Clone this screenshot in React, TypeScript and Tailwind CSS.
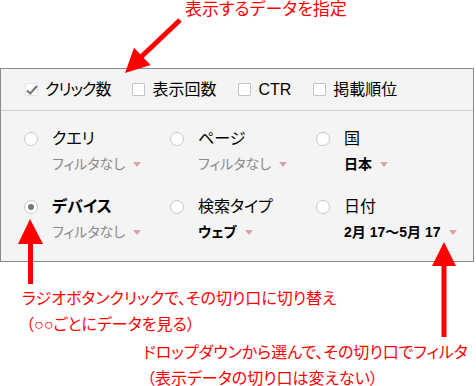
import React from "react";

const jp = "font-['Liberation_Sans','Noto_Sans_CJK_JP',sans-serif] [font-feature-settings:'palt']";

function Check({ checked }: { checked?: boolean }) {
  return (
    <span className={`relative w-[13px] h-[13px] border ${checked ? "border-[#e4e4e4]" : "border-[#c4c4c4]"} bg-white rounded-[1px] inline-block shrink-0`}>
      {checked && (
        <svg className="absolute -left-[1px] -top-[1px]" width="14" height="14" viewBox="0 0 14 14">
          <path d="M2 7.5 L5.2 10.5 L12 3" fill="none" stroke="#777" strokeWidth="2.2" />
        </svg>
      )}
    </span>
  );
}

function Radio({ on }: { on?: boolean }) {
  return (
    <span className="w-[14px] h-[14px] rounded-full border border-[#c8c8c8] bg-white flex items-center justify-center shrink-0">
      {on && <span className="w-[6px] h-[6px] rounded-full bg-[#777]" />}
    </span>
  );
}

function Tri() {
  return (
    <svg width="8" height="5" viewBox="0 0 8 5" className="ml-[8px] mt-[1px]">
      <path d="M0 0 H8 L4 5 Z" fill="#d8a3a3" />
    </svg>
  );
}

function Cell({ label, value, bold, on }: { label: string; value: string; bold?: boolean; on?: boolean }) {
  return (
    <div className="flex">
      <div className="pt-[4px]">
        <Radio on={on} />
      </div>
      <div className="ml-[14px] flex flex-col">
        <div className={`text-[16px] leading-[22px] text-black ${on ? "font-semibold" : ""}`}>{label}</div>
        <div className="flex items-center mt-[3px] h-[22px]">
          <span className={bold ? "text-[14px] font-bold text-black" : "text-[14px] text-[#8a8a8a]"}>{value}</span>
          <Tri />
        </div>
      </div>
    </div>
  );
}

export default function App() {
  return (
    <div className={`relative w-[476px] h-[386px] bg-white overflow-hidden ${jp}`}>
      <div className="h-[68px] pl-[185px] text-[17px] leading-[20px] text-[#ff0000]">表示するデータを指定</div>
      <div className="w-[474px] border border-[#8a8a8a] bg-[#f4f4f4]">
        <div className="h-[42px] border-b border-[#cfcfcf] flex items-center pl-[24px] text-[16px] text-black">
          <div className="flex items-center"><Check checked /><span className="ml-[7px] tracking-[-1px]">クリック数</span></div>
          <div className="flex items-center ml-[22px]"><Check /><span className="ml-[7px]">表示回数</span></div>
          <div className="flex items-center ml-[22px]"><Check /><span className="ml-[7px]">CTR</span></div>
          <div className="flex items-center ml-[22px]"><Check /><span className="ml-[7px]">掲載順位</span></div>
        </div>
        <div className="grid grid-cols-[146px_146px_146px] gap-y-[21px] pl-[23px] pt-[17px] pb-[18px]">
          <Cell label="クエリ" value="フィルタなし" />
          <Cell label="ページ" value="フィルタなし" />
          <Cell label="国" value="日本" bold />
          <Cell label="デバイス" value="フィルタなし" on />
          <Cell label="検索タイプ" value="ウェブ" bold />
          <Cell label="日付" value="2月 17〜5月 17" bold />
        </div>
      </div>
      <div className="pl-[22px] pt-[24px] text-[16px] leading-[26px] text-[#ff0000]">
        <div>ラジオボタンクリックで、その切り口に切り替え</div>
        <div className="pl-[4px]">（○○ごとにデータを見る）</div>
      </div>
      <div className="pl-[143px] pt-[2px] text-[16px] leading-[26px] text-[#ff0000] whitespace-nowrap">
        <div>ドロップダウンから選んで、その切り口でフィルタ</div>
        <div className="pl-[4px]">（表示データの切り口は変えない）</div>
      </div>
      <svg className="absolute inset-0 pointer-events-none" width="476" height="386" viewBox="0 0 476 386">
        <line x1="180" y1="20" x2="140" y2="58" stroke="#ff0000" strokeWidth="5" />
        <polygon points="125,73 150.6,65 134,47.8" fill="#ff0000" />
        <polygon points="30,219 18,244 43,244" fill="#ff0000" />
        <rect x="28" y="243" width="5" height="41" fill="#ff0000" />
        <polygon points="444,242 432,266 456,266" fill="#ff0000" />
        <rect x="441.5" y="265" width="5" height="72" fill="#ff0000" />
      </svg>
    </div>
  );
}
